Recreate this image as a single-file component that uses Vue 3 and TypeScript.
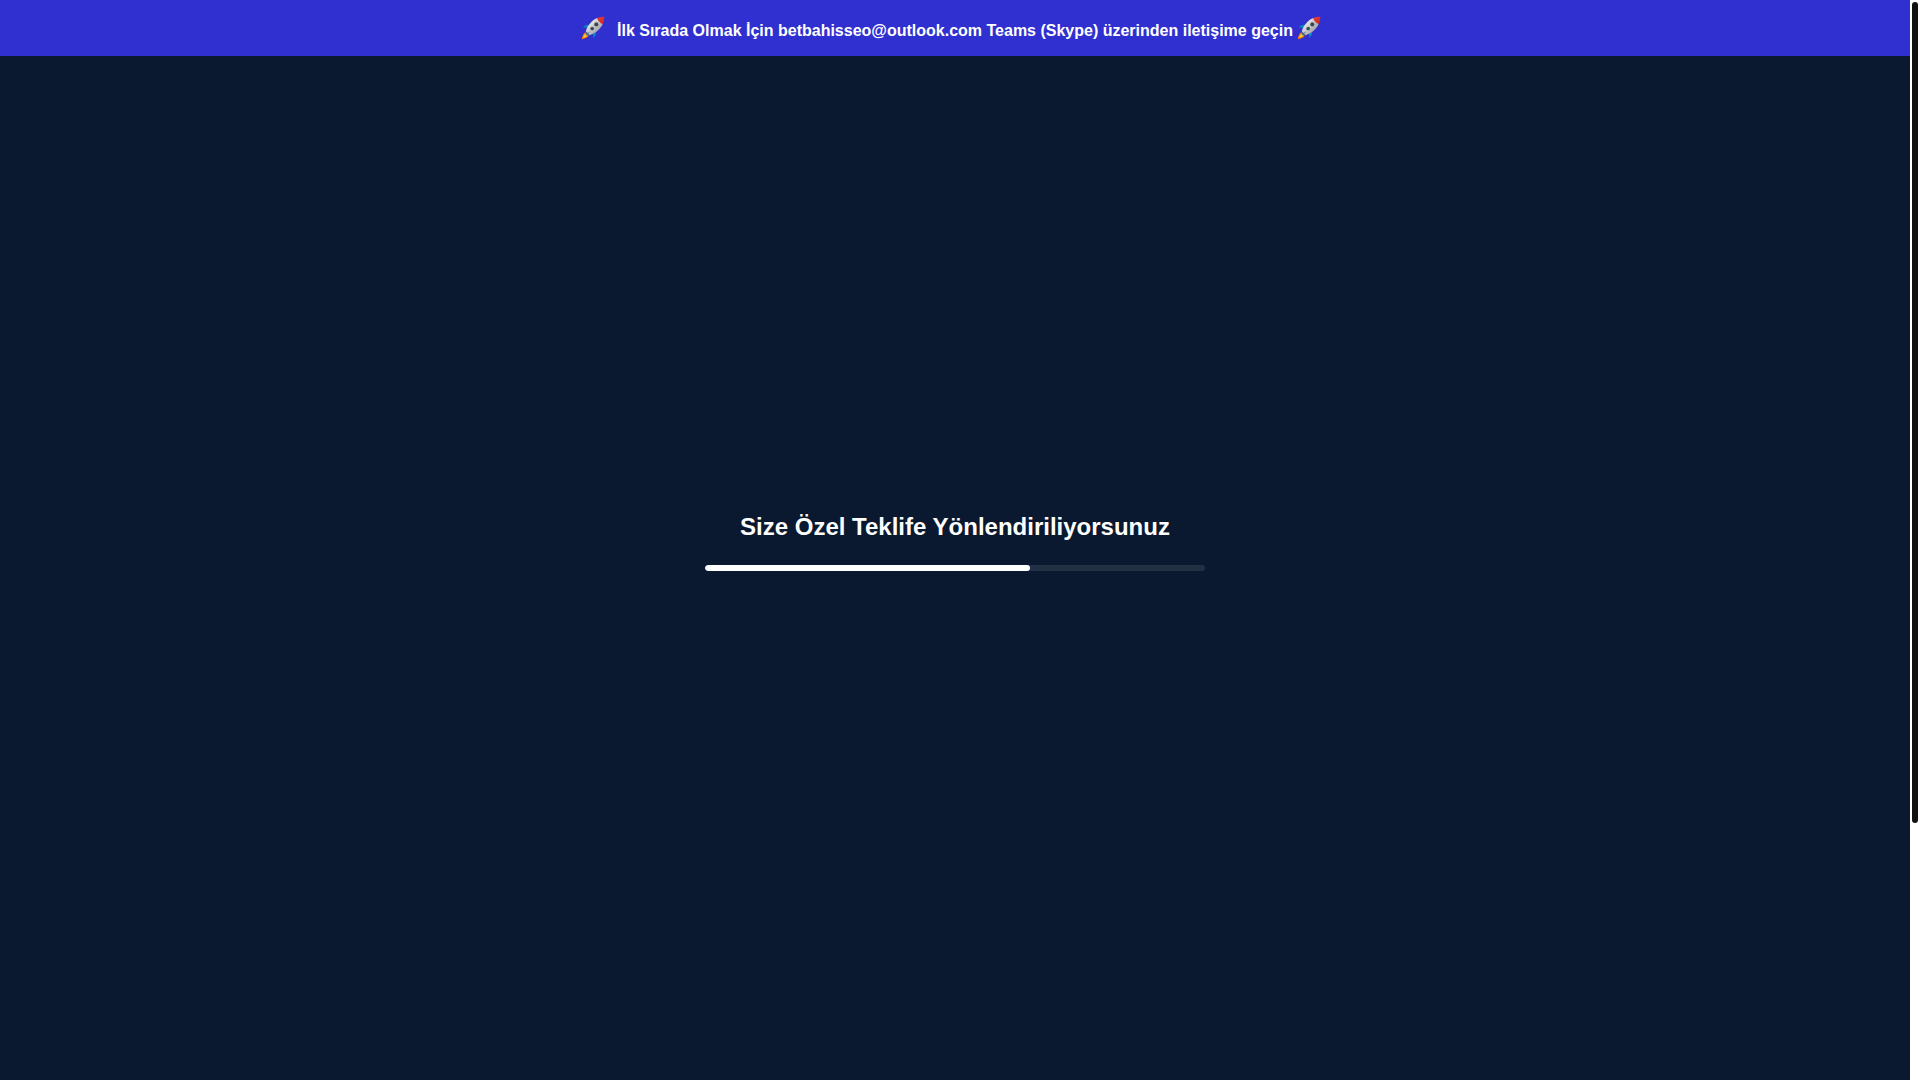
<script setup lang="ts">
import { ref } from 'vue'

const progress = ref(65)
const visible = ref(76.3)
</script>

<template>
  <svg class="defs" width="0" height="0" aria-hidden="true">
    <defs>
      <linearGradient id="hull" x1="0" y1="0" x2="1" y2="1">
        <stop offset="0.3" stop-color="#e2e2e4" />
        <stop offset="0.75" stop-color="#a4a4a8" />
      </linearGradient>
      <linearGradient id="nose" x1="0" y1="0" x2="1" y2="1">
        <stop offset="0.2" stop-color="#e53935" />
        <stop offset="1" stop-color="#c62828" />
      </linearGradient>
      <symbol id="rocket" viewBox="0 0 24 24">
        <path d="M8.500 9C5.500 8.500 3.300 9.300 2 11.700C4 11.200 5.500 11.600 6.500 13Z" fill="#0b86bc" />
        <path d="M15 15.500C15.500 18.500 14.500 20.600 12 21.800C12.700 20.100 12.300 18.800 11 17.700Z" fill="#0b86bc" />
        <path d="M4.500 16C2.300 17.300 1.300 20 .6 23.200C4 22.700 6.900 21.500 7.900 19.400Z" fill="#e8502c" />
        <path d="M4.500 16.600C2.600 18 1.700 20.300 1.100 22.800C4 22.200 6.400 21.200 7.400 19.200Z" fill="#f59a0c" />
        <path d="M4.500 18.300C3.400 19.200 2.900 20.400 2.600 21.500C4 21.100 5.300 20.500 6 19.400Z" fill="#fbd935" />
        <path d="M4.400 15.300L8.600 19.600L7.300 20L4.100 16.800Z" fill="#616161" />
        <path d="M16.400 2.100C11.800 3.500 6.500 9.300 4.800 15.300L8.600 19.200C14.500 17.400 20.500 12.200 21.800 7.500Z" fill="url(#hull)" />
        <path d="M16.100 2.200C18.300 1.100 20.900 .7 23.300 .7C23.300 3.100 22.900 5.600 21.800 7.900C19.200 7.200 16.800 4.800 16.100 2.200Z" fill="url(#nose)" />
        <circle cx="15.300" cy="8.400" r="2.400" fill="#9eaab0" />
        <circle cx="15.300" cy="8.400" r="1.900" fill="#37474f" />
        <circle cx="11.200" cy="12.600" r="2.200" fill="#9eaab0" />
        <circle cx="11.200" cy="12.600" r="1.700" fill="#37474f" />
        <path d="M9 15.200C7 16.400 5.200 18.200 4.400 19.800C5.900 19.100 7.800 17.400 9 15.200Z" fill="#0b7fae" />
      </symbol>
    </defs>
  </svg>

  <div class="window">
    <div class="page">
      <header class="banner">
        <svg class="rocket lead" aria-hidden="true"><use href="#rocket" /></svg>
        <strong class="message">İlk Sırada Olmak İçin betbahisseo@outlook.com Teams (Skype) üzerinden iletişime geçin</strong>
        <svg class="rocket trail" aria-hidden="true"><use href="#rocket" /></svg>
      </header>
      <main class="loader">
        <h1 id="status">Size Özel Teklife Yönlendiriliyorsunuz</h1>
        <div class="track" role="progressbar" aria-labelledby="status" :aria-valuenow="progress" aria-valuemin="0" aria-valuemax="100">
          <div class="fill" :style="{ width: progress + '%' }"></div>
        </div>
      </main>
    </div>
    <div class="scrollbar" aria-hidden="true">
      <div class="thumb" :style="{ height: visible + '%' }"></div>
    </div>
  </div>
</template>

<style>
body {
  margin: 0;
  background: #0a192f;
}
</style>

<style scoped>
.defs {
  position: absolute;
}
.window {
  display: flex;
  min-height: 100vh;
  font-family: "Liberation Sans", Arial, sans-serif;
  color: #fff;
}
.page {
  flex: 1;
  display: flex;
  flex-direction: column;
  background: #0a192f;
}
.banner {
  display: flex;
  align-items: center;
  justify-content: center;
  box-sizing: border-box;
  min-height: 56px;
  padding-right: 8px;
  background: #302fd0;
}
.message {
  padding-top: 6px;
  font-size: 16px;
  line-height: 20px;
}
.rocket {
  width: 24px;
  height: 24px;
}
.lead {
  margin-right: 12px;
}
.trail {
  margin-left: 4px;
}
.loader {
  flex: 1;
  display: flex;
  flex-direction: column;
  align-items: center;
  justify-content: center;
  padding-bottom: 52px;
}
h1 {
  margin: 0 0 24px;
  font-size: 24px;
  line-height: 28px;
}
.track {
  width: 500px;
  max-width: 90%;
  height: 6px;
  border-radius: 3px;
  overflow: hidden;
  background: #232f43;
}
.fill {
  height: 100%;
  border-radius: 3px;
  background: #fff;
}
.scrollbar {
  display: flex;
  flex-direction: column;
  box-sizing: border-box;
  width: 10px;
  padding: 2px;
  background: #fff;
}
.thumb {
  border-radius: 3px;
  background: #111;
}
</style>
